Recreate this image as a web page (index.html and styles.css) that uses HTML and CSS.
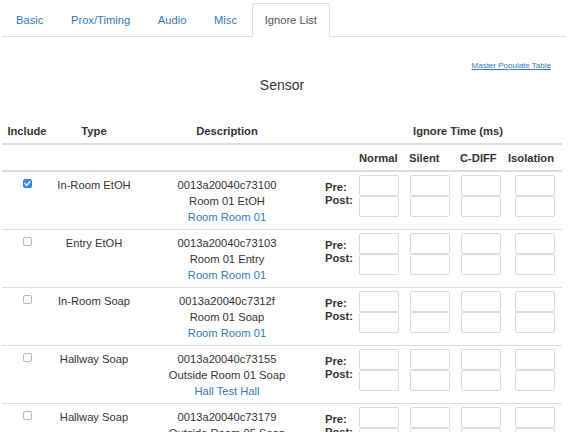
FILE: index.html
```html
<!DOCTYPE html>
<html>
<head>
<meta charset="utf-8">
<link rel="stylesheet" href="styles.css">
</head>
<body>
<ul class="tabs">
  <li class="tab"><a href="#">Basic</a></li>
  <li class="tab"><a href="#">Prox/Timing</a></li>
  <li class="tab"><a href="#">Audio</a></li>
  <li class="tab"><a href="#">Misc</a></li>
  <li class="tab active"><a href="#">Ignore List</a></li>
</ul>
<div class="content">
  <div class="master"><a href="#">Master Populate Table</a></div>
  <h4 class="title">Sensor</h4>
  <table class="grid">
    <colgroup>
      <col class="c-inc"><col class="c-type"><col class="c-desc"><col class="c-lbl">
      <col class="c-n"><col class="c-s"><col class="c-c"><col class="c-i">
    </colgroup>
    <thead>
      <tr>
        <th class="ctr">Include</th>
        <th class="ctr">Type</th>
        <th class="ctr">Description</th>
        <th></th>
        <th class="ctr" colspan="4">Ignore Time (ms)</th>
      </tr>
      <tr>
        <th></th><th></th><th></th><th></th>
        <th class="lft">Normal</th>
        <th class="lft">Silent</th>
        <th class="lft">C-DIFF</th>
        <th class="lft">Isolation</th>
      </tr>
    </thead>
    <tbody>
      <tr>
        <td><span class="cb checked"><svg viewBox="0 0 9 9" width="9" height="9"><path d="M2 4.6 L3.8 6.4 L7 2.6" fill="none" stroke="#fff" stroke-width="1.4" stroke-linecap="round" stroke-linejoin="round"/></svg></span></td>
        <td class="ctr">In-Room EtOH</td>
        <td class="ctr">0013a20040c73100<br>Room 01 EtOH<br><a href="#">Room Room 01</a></td>
        <td class="lbl">Pre:<br>Post:</td>
        <td class="in in-n"><input class="box" type="text"><input class="box" type="text"></td>
        <td class="in in-s"><input class="box" type="text"><input class="box" type="text"></td>
        <td class="in in-c"><input class="box" type="text"><input class="box" type="text"></td>
        <td class="in in-i"><input class="box" type="text"><input class="box" type="text"></td>
      </tr>
      <tr>
        <td><span class="cb"></span></td>
        <td class="ctr">Entry EtOH</td>
        <td class="ctr">0013a20040c73103<br>Room 01 Entry<br><a href="#">Room Room 01</a></td>
        <td class="lbl">Pre:<br>Post:</td>
        <td class="in in-n"><input class="box" type="text"><input class="box" type="text"></td>
        <td class="in in-s"><input class="box" type="text"><input class="box" type="text"></td>
        <td class="in in-c"><input class="box" type="text"><input class="box" type="text"></td>
        <td class="in in-i"><input class="box" type="text"><input class="box" type="text"></td>
      </tr>
      <tr>
        <td><span class="cb"></span></td>
        <td class="ctr">In-Room Soap</td>
        <td class="ctr">0013a20040c7312f<br>Room 01 Soap<br><a href="#">Room Room 01</a></td>
        <td class="lbl">Pre:<br>Post:</td>
        <td class="in in-n"><input class="box" type="text"><input class="box" type="text"></td>
        <td class="in in-s"><input class="box" type="text"><input class="box" type="text"></td>
        <td class="in in-c"><input class="box" type="text"><input class="box" type="text"></td>
        <td class="in in-i"><input class="box" type="text"><input class="box" type="text"></td>
      </tr>
      <tr>
        <td><span class="cb"></span></td>
        <td class="ctr">Hallway Soap</td>
        <td class="ctr">0013a20040c73155<br>Outside Room 01 Soap<br><a href="#">Hall Test Hall</a></td>
        <td class="lbl">Pre:<br>Post:</td>
        <td class="in in-n"><input class="box" type="text"><input class="box" type="text"></td>
        <td class="in in-s"><input class="box" type="text"><input class="box" type="text"></td>
        <td class="in in-c"><input class="box" type="text"><input class="box" type="text"></td>
        <td class="in in-i"><input class="box" type="text"><input class="box" type="text"></td>
      </tr>
      <tr>
        <td><span class="cb"></span></td>
        <td class="ctr">Hallway Soap</td>
        <td class="ctr">0013a20040c73179<br>Outside Room 05 Soap<br><a href="#">Hall Test Hall</a></td>
        <td class="lbl">Pre:<br>Post:</td>
        <td class="in in-n"><input class="box" type="text"><input class="box" type="text"></td>
        <td class="in in-s"><input class="box" type="text"><input class="box" type="text"></td>
        <td class="in in-c"><input class="box" type="text"><input class="box" type="text"></td>
        <td class="in in-i"><input class="box" type="text"><input class="box" type="text"></td>
      </tr>
    </tbody>
  </table>
</div>
</body>
</html>
```

FILE: styles.css
```css
html { overflow: hidden; }
body {
  margin: 0;
  font-family: "Liberation Sans", Arial, sans-serif;
  font-size: 11.2px;
  line-height: 16px;
  color: #333;
  background: #fff;
}
a { color: #337ab7; text-decoration: none; }

.tabs {
  display: flex;
  list-style: none;
  margin: 0 4px 0 2px;
  padding: 3px 0 0 1px;
  border-bottom: 1px solid #ddd;
}
.tab { margin: 0 1.6px -1px 0; }
.tab a {
  display: block;
  padding: 8px 12px;
  border: 1px solid transparent;
  border-radius: 3px 3px 0 0;
}
.tab.active a {
  color: #555;
  background: #fff;
  border-color: #ddd #ddd transparent;
}

.content { margin: 0 8px 0 2px; }
.master {
  text-align: right;
  margin: 23px 11px 0 0;
  font-size: 8px;
  line-height: 11px;
}
.master a { text-decoration: underline; }
.title {
  margin: 6px 0 0;
  font-size: 14px;
  line-height: 16px;
  font-weight: normal;
  text-align: center;
}

.grid {
  margin-top: 25px;
  width: 100%;
  table-layout: fixed;
  border-collapse: collapse;
}
.c-inc { width: 50px; }
.c-type { width: 84px; }
.c-desc { width: 182px; }
.c-lbl { width: 36px; }
.c-n { width: 50px; }
.c-s { width: 51px; }
.c-c { width: 48px; }

.grid th, .grid td {
  padding: 4.5px 5px;
  vertical-align: top;
  white-space: nowrap;
}
.grid th { font-weight: bold; border-bottom: 2px solid #ddd; }
.grid td { border-top: 1px solid #ddd; }
.ctr { text-align: center; }
.lft { text-align: left; }

.cb {
  display: block;
  width: 9px;
  height: 9px;
  margin: 2.5px auto 0;
  box-sizing: border-box;
  border: 1px solid #b8b8b8;
  border-radius: 2px;
  background: #fff;
}
.cb svg { display: block; margin: -1px; }
.cb.checked { border-color: #2e7ee6; background: #3a8bf0; }

.grid td.lbl {
  font-weight: bold;
  padding: 8.5px 0 0 7px;
  line-height: 13px;
}
.grid td.in { padding-top: 3px; padding-right: 0; }
.grid td.in-n { padding-left: 5px; }
.grid td.in-s { padding-left: 6px; }
.grid td.in-c { padding-left: 6px; }
.grid td.in-i { padding-left: 12px; }
.box {
  display: block;
  width: 40px;
  height: 21px;
  margin: 0;
  padding: 0;
  box-sizing: border-box;
  border: 1px solid #dadada;
  border-radius: 2px;
  background: #fff;
  outline: none;
}
```
